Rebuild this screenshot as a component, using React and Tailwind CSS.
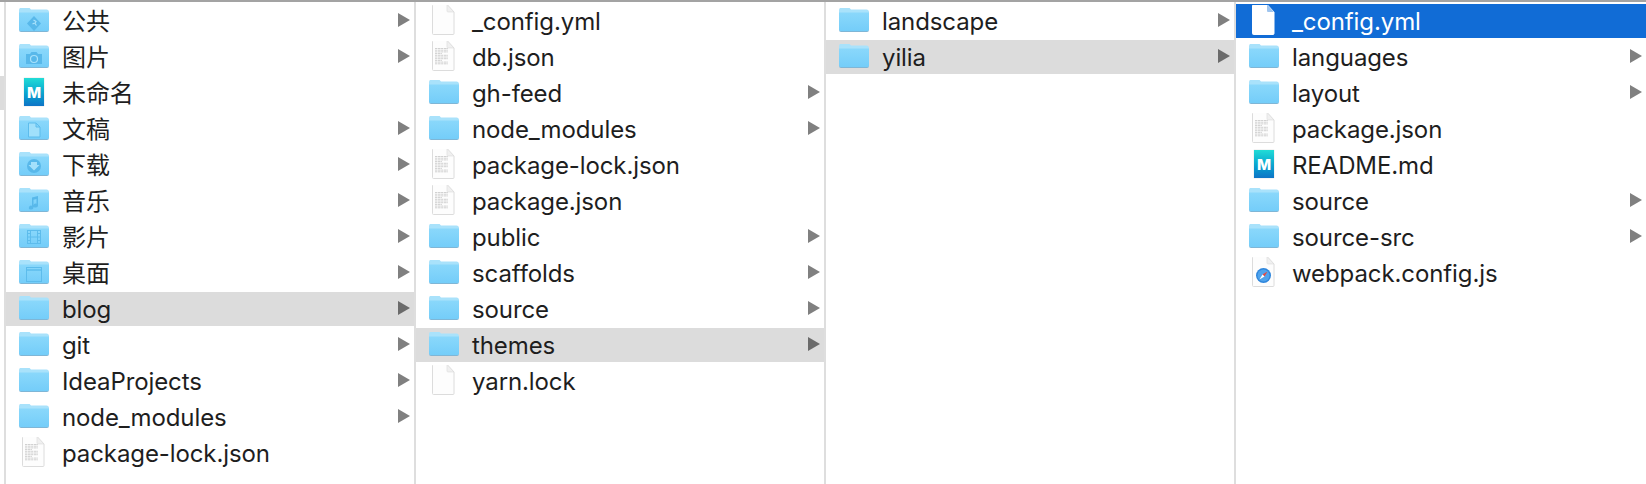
const gap = "[font-family:Inter,'Noto_Sans_CJK_SC',sans-serif]";

function Folder({ glyph }) {
  return (
    <svg width="32" height="26" viewBox="0 2 32 26" className="shrink-0">
      <defs>
        <linearGradient id="folderBody" x1="0" y1="0" x2="0" y2="1">
          <stop offset="0" stopColor="#8ad8fb" />
          <stop offset="1" stopColor="#74cdf9" />
        </linearGradient>
      </defs>
      <path d="M1 4.500C1 2.500 2 1.500 3.500 1.500h6.500c1.500 0 2 .8 3 2h15.500C30 3.500 31 4.500 31 6v17c0 1.500-1 2-2 2H3c-1 0-2-.5-2-2z" fill="#a9e2fb" />
      <path d="M1 6.500h30V23.500c0 1-1 1.500-2 1.500H3c-1 0-2-.5-2-1.500z" fill="url(#folderBody)" />
      <path d="M1 23.500c0 1 1 1.500 2 1.500h26c1 0 2-.5 2-1.500v.8c0 1-1 1.700-2 1.700H3c-1 0-2-.7-2-1.700z" fill="#7fb6d6" />
      {glyph === "public" && (
        <g transform="translate(0 2)">
          <path d="M16 8l7 7.500-7 7.500-7-7.500z" fill="#58b8ea" />
          <path d="M15.500 12l2.500 1.500-1 2 1.500 2M16.500 15l-2 1" stroke="#a9e2fb" strokeWidth="1.200" fill="none" />
        </g>
      )}
      {glyph === "pictures" && (
        <g fill="none">
          <path d="M8 12h4l1.500-2h5l1.500 2h4v10H8z" fill="#58b8ea" />
          <circle cx="16" cy="17" r="3.500" stroke="#a9e2fb" strokeWidth="1.200" />
        </g>
      )}
      {glyph === "docs" && (
        <path d="M10.500 9h7.500l4 4v10h-11.500z M18 9v4h4" fill="#a0e0fb" stroke="#5dbcec" strokeWidth="1" />
      )}
      {glyph === "downloads" && (
        <g>
          <circle cx="16" cy="16" r="7" fill="#58b8ea" />
          <path d="M13 12.500h6v3h2.500L16 21l-5.500-5.500H13z" transform="translate(0 -.5)" fill="#a4e0fb" />
        </g>
      )}
      {glyph === "music" && (
        <path transform="translate(0 1.500)" d="M14 10l6-1.500v9.500a2.300 2 0 1 1-1.500-1.800V11.500l-3 .8v7.700a2.300 2 0 1 1-1.500-1.800z" fill="#58b8ea" />
      )}
      {glyph === "movies" && (
        <g fill="none" stroke="#5dbcec" strokeWidth="1">
          <rect x="9.500" y="8.500" width="13" height="13" />
          <path d="M12.500 8.500v13M19.500 8.500v13M12.500 15h7M9.500 11.500h3M9.500 15h3M9.500 18.500h3M19.500 11.500h3M19.500 15h3M19.500 18.500h3" />
        </g>
      )}
      {glyph === "desktop" && (
        <g fill="none" stroke="#5dbcec" strokeWidth="1">
          <rect x="8.500" y="9.500" width="15" height="14" />
          <path d="M8.500 12h15" strokeWidth="1.500" />
        </g>
      )}
    </svg>
  );
}

function DocIcon({ kind, white }) {
  const lines = [];
  if (kind === "text") {
    for (let i = 0; i < 10; i++) {
      lines.push(
        <path
          key={i}
          d={`M4 ${9 + i * 1.700}h${i % 4 === 3 ? 7 : 13}`}
          stroke="#bdbdbd"
          strokeWidth=".7"
          strokeDasharray="2 .6 3 .5"
        />
      );
    }
  }
  return (
    <svg width="24" height="32" viewBox="0 1.500 24 32" className="shrink-0">
      <path
        d="M1.500 2a1 1 0 0 1 1-1h13.500l7 7.500V30a1 1 0 0 1-1 1h-19.500a1 1 0 0 1-1-1z"
        fill={white ? "#fff" : "#fdfdfd"}
        stroke={white ? "#fff" : "#dcdcdc"}
      />
      <path d="M16 1v6.500a1 1 0 0 0 1 1h6z" fill={white ? "#9fc5ef" : "#f0f0f0"} stroke={white ? "none" : "#dcdcdc"} strokeWidth=".6" />
      {lines}
      {kind === "safari" && (
        <g>
          <circle cx="12.500" cy="20" r="7.500" fill="#2f86dc" />
          <circle cx="12.500" cy="20" r="6" fill="#4fa3ec" />
          <path d="M16.500 16l-3 5-2-2z" fill="#e8483f" />
          <path d="M8.500 24l3-5 2 2z" fill="#fff" />
        </g>
      )}
    </svg>
  );
}

function MarkdownIcon() {
  return (
    <div className="mb-[2px] flex h-[28px] w-[20px] shrink-0 items-center justify-center bg-gradient-to-b from-[#22dcd6] to-[#0f74c6] text-[15px] leading-none font-extrabold text-white shadow-[0_0_1px_#bbb]">
      M
    </div>
  );
}

function Row({ item }) {
  const bg = item.state === "selected" ? "bg-[#116cd6] text-white" : item.state === "open" ? "bg-[#dcdcdc]" : "";
  return (
    <div className={`flex h-[34px] items-center ${bg}`}>
      <div className="flex w-[56px] shrink-0 items-center">
        {item.type === "folder" && (
          <div className="ml-[12px] flex">
            <Folder glyph={item.glyph} />
          </div>
        )}
        {item.type === "doc" && (
          <div className="ml-[15px] flex">
            <DocIcon kind={item.kind} white={item.state === "selected"} />
          </div>
        )}
        {item.type === "md" && (
          <div className="ml-[18px] flex">
            <MarkdownIcon />
          </div>
        )}
      </div>
      <span className="flex-1 pt-[2px] whitespace-nowrap">{item.name}</span>
      {item.type === "folder" && (
        <div
          className={`mr-[4px] mb-[2px] h-[14px] w-[12px] shrink-0 [clip-path:polygon(0_0,100%_50%,0_100%)] ${
            item.state === "open" ? "bg-[#6b6b6b]" : "bg-[#808080]"
          }`}
        />
      )}
    </div>
  );
}

const folder = (name, glyph, state) => ({ type: "folder", name, glyph, state });
const doc = (name, kind, state) => ({ type: "doc", name, kind, state });

const columns = [
  {
    width: "w-[410px]",
    items: [
      folder("公共", "public"),
      folder("图片", "pictures"),
      { type: "md", name: "未命名" },
      folder("文稿", "docs"),
      folder("下载", "downloads"),
      folder("音乐", "music"),
      folder("影片", "movies"),
      folder("桌面", "desktop"),
      folder("blog", null, "open"),
      folder("git"),
      folder("IdeaProjects"),
      folder("node_modules"),
      doc("package-lock.json", "text"),
    ],
  },
  {
    width: "w-[410px]",
    items: [
      doc("_config.yml", "blank"),
      doc("db.json", "text"),
      folder("gh-feed"),
      folder("node_modules"),
      doc("package-lock.json", "text"),
      doc("package.json", "text"),
      folder("public"),
      folder("scaffolds"),
      folder("source"),
      folder("themes", null, "open"),
      doc("yarn.lock", "blank"),
    ],
  },
  {
    width: "w-[410px]",
    items: [folder("landscape"), folder("yilia", null, "open")],
  },
  {
    width: "flex-1",
    items: [
      doc("_config.yml", "blank", "selected"),
      folder("languages"),
      folder("layout"),
      doc("package.json", "text"),
      { type: "md", name: "README.md" },
      folder("source"),
      folder("source-src"),
      doc("webpack.config.js", "safari"),
    ],
  },
];

export default function App() {
  return (
    <div className={`flex h-[484px] w-[1646px] overflow-hidden border-t-2 border-[#a3a3a3] bg-white text-[24px] leading-none tracking-[-0.1px] text-[#1e1e1e] ${gap}`}>
      {/* sliver of the column scrolled off to the left */}
      <div className="w-[6px] shrink-0 border-r-2 border-[#dedede] pt-[74px]">
        <div className="h-[34px] bg-[#dcdcdc]" />
      </div>
      {columns.map((col, i) => (
        <div key={i} className={`${col.width} flex flex-col gap-[2px] border-[#dedede] pt-[2px] ${i < 3 ? "border-r-2" : ""}`}>
          {col.items.map((item) => (
            <Row key={item.name} item={item} />
          ))}
        </div>
      ))}
    </div>
  );
}
